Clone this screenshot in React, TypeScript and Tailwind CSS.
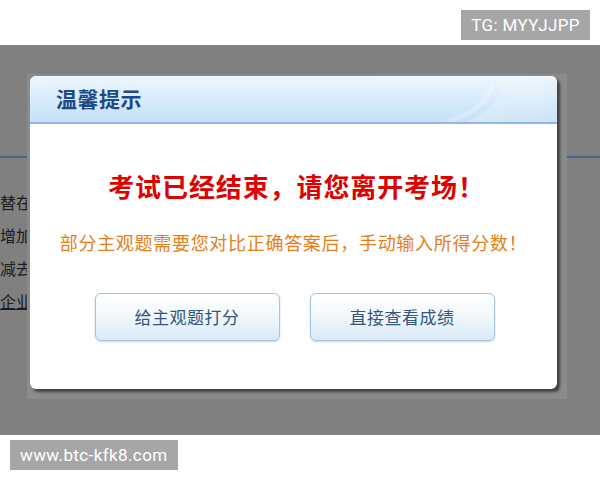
import React from 'react'

const cjk = { fontFamily: '"Noto Sans CJK SC", "Noto Sans", sans-serif' }
const latin = { fontFamily: 'Roboto, "Liberation Sans", sans-serif' }

const bgLines = ['替在', '增加', '减去', '企业']

const DialogButton = ({ label }: { label: string }) => (
  <button className="w-[185px] h-[48px] rounded-[6px] border border-[#a9c3da] bg-gradient-to-b from-[#ffffff] via-[#f1f7fc] to-[#d8e9f7] shadow-[0_1px_2px_rgba(90,120,150,0.35)] text-[17px] text-[#34567e] tracking-[0.5px]">
    {label}
  </button>
)

export default function App() {
  return (
    <div className="w-[600px] h-[480px] bg-white flex flex-col" style={cjk}>
      <div className="h-[45px] flex justify-end items-start pt-[10px] pr-[10px]">
        <div className="h-[30px] px-[10px] bg-[#a6a6a6] text-white text-[17px] tracking-[0.4px] leading-[30px]" style={latin}>
          TG: MYYJJPP
        </div>
      </div>

      <div className="relative h-[390px] bg-[#808080] overflow-hidden">
        {/* page behind the overlay */}
        <div className="h-[113px] border-b-2 border-[#4a6584]" />
        <div className="flex flex-col items-start pt-[32px] gap-[9px] text-[16px] leading-[24px] text-[#1c1c1c]">
          {bgLines.map((t, i) => (
            <span key={t} className={'whitespace-nowrap ' + (i === 3 ? 'underline' : '')}>
              {t}
            </span>
          ))}
        </div>

        {/* dialog */}
        <div className="absolute left-[27px] top-[29px] pl-[3px] pt-[2px] pr-[10px] pb-[10px] bg-[#8b8b8b]">
          <div className="w-[527px] h-[313px] rounded-[6px] bg-white overflow-hidden flex flex-col shadow-[3px_3px_3px_rgba(0,0,0,0.55)]">
            <div className="relative h-[48px] shrink-0 bg-gradient-to-b from-[#edf6fd] to-[#c4e1f9] border-b-2 border-[#94b8dc] flex items-center pl-[26px]">
              <svg className="absolute right-0 top-0" width="300" height="46" viewBox="0 0 300 46">
                <defs>
                  <linearGradient id="sw" x1="0" y1="0" x2="1" y2="0">
                    <stop offset="0" stopColor="#ffffff" stopOpacity="0" />
                    <stop offset="0.7" stopColor="#ffffff" stopOpacity="0.25" />
                    <stop offset="1" stopColor="#ffffff" stopOpacity="0.1" />
                  </linearGradient>
                </defs>
                <path d="M0 8 C 120 4, 220 0, 240 6 C 250 20, 230 38, 208 46 L 300 46 L 300 0 L 0 0 Z" fill="url(#sw)" />
                <path d="M190 46 C 215 38, 232 26, 236 8" stroke="#ffffff" strokeOpacity="0.25" strokeWidth="5" fill="none" />
              </svg>
              <span className="relative text-[21px] font-bold text-[#1d4a86] tracking-[0.5px]">温馨提示</span>
            </div>

            <div className="flex-1 flex flex-col items-center pt-[45px]">
              <div className="text-[26px] leading-[34px] font-bold text-[#e00000] tracking-[0.9px] pl-[6px]">考试已经结束，请您离开考场！</div>
              <div className="mt-[26px] text-[18px] leading-[26px] text-[#e3801a] tracking-[0.7px]">
                部分主观题需要您对比正确答案后，手动输入所得分数！
              </div>
              <div className="mt-[38px] flex gap-[30px] pl-[2px]">
                <DialogButton label="给主观题打分" />
                <DialogButton label="直接查看成绩" />
              </div>
            </div>
          </div>
        </div>
      </div>

      <div className="h-[45px] flex items-start pt-[5px] pl-[10px]">
        <div className="h-[30px] px-[10px] bg-[#a6a6a6] text-white text-[17px] tracking-[0.4px] leading-[30px]" style={latin}>
          www.btc-kfk8.com
        </div>
      </div>
    </div>
  )
}
